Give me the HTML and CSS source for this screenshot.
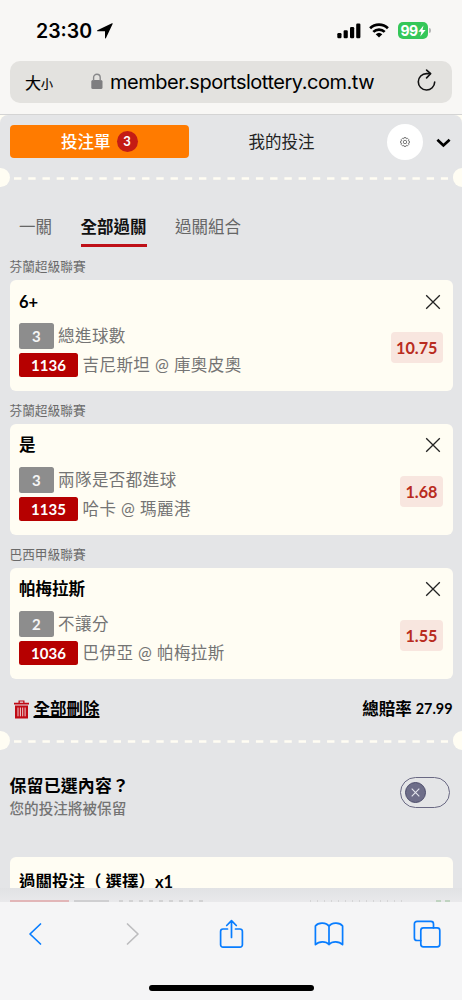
FILE: index.html
```html
<!DOCTYPE html>
<html lang="zh-Hant">
<head>
<meta charset="utf-8">
<meta name="viewport" content="width=device-width, initial-scale=1">
<title>投注單</title>
<link rel="stylesheet" href="styles.css">
</head>
<body>
<div class="screen">
  <header class="browser-top">
    <div class="status">
      <span class="clock">23:30</span>
      <svg class="location" width="16" height="16" viewBox="0 0 16 16"><path d="M.4 7.2 15 .3c.5-.2.8.1.6.6L9 15.1c-.3.7-1 .6-1-.1V8.2H.9C.1 8.2-.2 7.5.4 7.2Z"/></svg>
      <div class="status-right">
        <svg width="24" height="16" viewBox="0 0 24 16"><rect x=".3" y="10" width="4.2" height="5.3" rx="1.2"/><rect x="6.6" y="7.3" width="4.2" height="8" rx="1.2"/><rect x="13" y="4" width="4.2" height="11.3" rx="1.2"/><rect x="19.2" y=".6" width="4.2" height="14.7" rx="1.2"/></svg>
        <svg width="20" height="15" viewBox="0 0 20 15"><g fill="none" stroke="#000" stroke-width="2.7"><path d="M1.1 5.3a12.7 12.7 0 0 1 17.8 0"/><path d="M4.3 8.9a8.2 8.2 0 0 1 11.4 0"/></g><path d="M10 14.6 6.7 11.3a4.8 4.8 0 0 1 6.6 0Z"/></svg>
        <div class="battery"><span>99</span><svg width="8" height="12" viewBox="0 0 8 12"><path d="M5.5.4.4 6.8h3L2.3 11.6 7.6 5H4.5Z" fill="#fff"/></svg></div>
        <i class="battery-tip"></i>
      </div>
    </div>
    <div class="address">
      <span class="size-big">大</span><span class="size-small">小</span>
      <svg class="lock" width="12" height="17" viewBox="0 0 12 17"><rect x=".3" y="7" width="11.2" height="9" rx="1.5" fill="#7e7e80"/><path d="M2.6 8V4.6a3.3 3.3 0 0 1 6.6 0V8" fill="none" stroke="#88888a" stroke-width="1.4"/></svg>
      <span class="host">member.sportslottery.com.tw</span>
      <svg class="reload" width="20" height="24" viewBox="0 0 20 24" fill="none" stroke="#111" stroke-width="1.6" stroke-linecap="round" stroke-linejoin="round"><path d="M17.7 13a8.2 8.2 0 1 1-8.2-8.4h3.8"/><path d="M9.600 1.100l4 3.600-4 4.200"/></svg>
    </div>
  </header>

  <main class="page">
    <div class="slip">
      <nav class="top-tabs">
        <div class="tab-slip">投注單<span class="count">3</span></div>
        <div class="tab-mine">我的投注</div>
        <div class="gear"><svg width="10" height="10" viewBox="0 0 20 20" fill="none" stroke="#555" stroke-width="1.5"><path d="M8 1.2h4l.7 2.5 2.2-1.2 2.7 2.8-1.2 2.2 2.4.6v4l-2.4.6 1.2 2.2-2.7 2.8-2.2-1.2-.7 2.3H8l-.7-2.3-2.2 1.2-2.7-2.8 1.2-2.2-2.4-.6v-4l2.4-.6-1.2-2.2 2.7-2.8 2.2 1.2Z"/><circle cx="10" cy="10" r="3.4"/></svg></div>
        <svg class="chevron" width="15" height="10" viewBox="0 0 15 10"><path d="M1.4 1.7 7.4 7.5l6.2-5.8" fill="none" stroke="#000" stroke-width="2.7"/></svg>
      </nav>
      <div class="tear"><i></i><svg class="dashes" height="3"><line x1="0" y1="1.5" x2="100%" y2="1.5" stroke="#fffdf3" stroke-width="2.5" stroke-dasharray="7.4 6.83"/></svg><i></i></div>
      <nav class="modes"><span>一關</span><span class="active">全部過關</span><span>過關組合</span></nav>

      <section class="bet">
        <h3 class="league">芬蘭超級聯賽</h3>
        <div class="card">
          <div class="pick"><b>6+</b><svg class="close" width="16" height="16" viewBox="0 0 16 16"><path d="M1.2 1.2l13.6 13.6M14.8 1.2 1.2 14.8"/></svg></div>
          <div class="info">
            <div class="lines"><div class="line"><span class="tag gray">3</span><span>總進球數</span></div><div class="line match"><span class="tag red">1136</span><span>吉尼斯坦 @ 庫奧皮奧</span></div></div>
            <span class="odds">10.75</span>
          </div>
        </div>
      </section>
      <section class="bet">
        <h3 class="league">芬蘭超級聯賽</h3>
        <div class="card">
          <div class="pick"><b>是</b><svg class="close" width="16" height="16" viewBox="0 0 16 16"><path d="M1.2 1.2l13.6 13.6M14.8 1.2 1.2 14.8"/></svg></div>
          <div class="info">
            <div class="lines"><div class="line"><span class="tag gray">3</span><span>兩隊是否都進球</span></div><div class="line match"><span class="tag red">1135</span><span>哈卡 @ 瑪麗港</span></div></div>
            <span class="odds">1.68</span>
          </div>
        </div>
      </section>
      <section class="bet">
        <h3 class="league">巴西甲級聯賽</h3>
        <div class="card">
          <div class="pick"><b>帕梅拉斯</b><svg class="close" width="16" height="16" viewBox="0 0 16 16"><path d="M1.2 1.2l13.6 13.6M14.8 1.2 1.2 14.8"/></svg></div>
          <div class="info">
            <div class="lines"><div class="line"><span class="tag gray">2</span><span>不讓分</span></div><div class="line match"><span class="tag red">1036</span><span>巴伊亞 @ 帕梅拉斯</span></div></div>
            <span class="odds">1.55</span>
          </div>
        </div>
      </section>

      <div class="summary">
        <svg class="trash" width="15" height="19" viewBox="0 0 15 19"><path d="M0 2.8h4.5V.4h6v2.4H15v1.8H0ZM5.8 2.8h3.4V1.5H5.8ZM1 5.6h13v12.8H1Z" fill="#c00914" fill-rule="evenodd"/><path d="M4 7.5v8.8M6.4 7.5v8.8M8.7 7.5v8.8M11.1 7.5v8.8" stroke="#ecd0d2" stroke-width="1"/></svg>
        <a class="clear">全部刪除</a>
        <div class="total"><span>總賠率</span><span class="total-value">27.99</span></div>
      </div>
      <div class="tear lower"><i></i><svg class="dashes" height="3"><line x1="0" y1="1.5" x2="100%" y2="1.5" stroke="#fffdf3" stroke-width="2.5" stroke-dasharray="7.4 6.83"/></svg><i></i></div>
      <div class="keep">
        <div><div class="keep-title">保留已選內容？</div><div class="keep-sub">您的投注將被保留</div></div>
        <div class="toggle"><span class="knob"><svg width="9" height="9" viewBox="0 0 9 9"><path d="M.7.7l7.6 7.6M8.3.7.7 8.3" stroke="#e4e5ed" stroke-width="1.1"/></svg></span></div>
      </div>
      <div class="stake"><span>過關投注（</span><span class="choice">選擇）</span><span class="times">x1</span></div>
      <div class="fade"><i class="f1"></i><i class="f2"></i><i class="f3"></i><i class="f4"></i><i class="f5"></i></div>
    </div>
  </main>

  <footer class="toolbar">
    <div class="actions">
      <svg width="14" height="24" viewBox="0 0 14 24"><path d="M12.5 2 2 12l10.5 10" stroke="#087dff"/></svg>
      <svg width="14" height="24" viewBox="0 0 14 24"><path d="M1.5 2 12 12 1.5 22" stroke="#bdbdbf"/></svg>
      <svg width="25" height="30" viewBox="0 0 25 30" stroke="#087dff"><path d="M8.5 10H4a2.4 2.4 0 0 0-2.4 2.4v13.4A2.4 2.4 0 0 0 4 28.2h17a2.4 2.4 0 0 0 2.4-2.4V12.4A2.4 2.4 0 0 0 21 10h-4.5M12.5 18.5V2M7.7 6.5l4.8-4.8 4.8 4.8"/></svg>
      <svg width="30" height="24" viewBox="0 0 30 24" stroke="#087dff"><path d="M15 4.3C12.5.4 4.5-.2 1.4 4v18.6C5 19 12 19 15 22.5c3-3.5 10-3.5 13.6.1V4C25.5-.2 17.5.4 15 4.3V22.5"/></svg>
      <svg width="28" height="28" viewBox="0 0 28 28" stroke="#087dff"><rect x="7.8" y="7.8" width="19" height="19" rx="2.6"/><path d="M7.8 20.5H4A2.6 2.6 0 0 1 1.4 17.9V4A2.6 2.6 0 0 1 4 1.4h13.9A2.6 2.6 0 0 1 20.500 4v3.800"/></svg>
    </div>
    <div class="home"></div>
  </footer>
</div>
</body>
</html>
```

FILE: styles.css
```css
* { box-sizing: border-box; }
body { margin: 0; }
svg { display: block; flex: none; }
i, span, b { display: block; }

.screen {
  width: 462px; height: 1000px; overflow: hidden;
  display: flex; flex-direction: column;
  background: #fffdf3; color: #000;
  font-family: Lato, "Noto Sans CJK TC", sans-serif;
  white-space: nowrap;
}

/* Browser chrome */
.browser-top { height: 115px; flex: none; background: #f8f7f5; border-bottom: 1px solid #d4d4d4; }
.status { height: 61px; display: flex; align-items: center; padding: 0 31px 0 36px; }
.clock { width: 61px; font: 600 19.5px/24px Inter, sans-serif; }
.status-right { margin-left: auto; display: flex; align-items: center; }
.status-right > svg + svg { margin: 0 9px 0 8px; }
.battery {
  width: 30px; height: 17px; border-radius: 5px; background: #35c759; color: #fff;
  display: flex; align-items: center; justify-content: center;
  font: 700 14px/17px Inter, sans-serif; letter-spacing: -.5px;
}
.battery-tip { width: 2px; height: 5px; margin: 0 0 0 1px; border-radius: 0 2px 2px 0; background: #b5b5b5; }
.address {
  height: 42px; margin: 0 10px; padding: 0 15px; border-radius: 10px; background: #e3e2df;
  display: flex; align-items: center;
}
.size-big { font: 400 16px/24px "Noto Sans CJK TC", sans-serif; -webkit-text-stroke: .2px #000; }
.size-small { font: 400 12px/24px "Noto Sans CJK TC", sans-serif; padding-top: 3px; -webkit-text-stroke: .2px #000; }
.lock { margin: 0 7px 2px 38px; }
.host { font: 400 20px/26px Inter, sans-serif; letter-spacing: -.48px; }
.reload { margin: 0 0 3px auto; }

/* Bet slip */
.page { height: 787px; flex: none; }
.slip { height: 100%; border-radius: 8px 8px 0 0; background: #e4e5e7; overflow: hidden; }
.top-tabs { height: 53px; padding: 0 11px 0 9.5px; display: flex; align-items: center; font-size: 16.5px; line-height: 24px; }
.tab-slip {
  width: 179.5px; height: 33px; border-radius: 4px; background: #ff7b00; color: #fff; font-weight: 500;
  display: flex; align-items: center; justify-content: center; gap: 6px;
}
.count { width: 21px; height: 21px; border-radius: 50%; background: #c41c14; text-align: center; font: 700 13px/21px Lato, sans-serif; }
.tab-mine { width: 185px; text-align: center; color: #222; }
.gear { width: 36px; height: 36px; margin-left: 13px; border-radius: 50%; background: #fff; display: flex; align-items: center; justify-content: center; }
.chevron { margin: 2px 0 0 auto; }
.tear { height: 19px; display: flex; align-items: center; justify-content: space-between; }
.tear i { width: 9.5px; height: 19px; background: #fffdf3; border-radius: 0 10px 10px 0; }
.tear i:last-child { border-radius: 10px 0 0 10px; }
.dashes { width: 434px; margin-top: 2px; }
.modes { height: 60px; padding: 25px 19px 0; display: flex; gap: 28.5px; font-size: 16.5px; line-height: 30px; color: #666; }
.active { height: 34.5px; border-bottom: 3.5px solid #bf1018; color: #111; font-weight: 700; }
.bet { height: 143.8px; padding: 0 9.5px; }
.league { height: 33px; margin: 0; padding-top: 9px; font-size: 12.7px; line-height: 20px; font-weight: 400; color: #6a6a6a; }
.card { height: 111px; padding: 9px 9.5px 0; background: #fffdf3; border-radius: 6px; }
.pick { height: 25px; display: flex; align-items: center; justify-content: space-between; font-size: 16.5px; line-height: 25px; }
.pick b { padding-top: 1px; }
.close { margin-right: 2px; fill: none; stroke: #222; stroke-width: 1.3; }
.info { height: 66px; display: flex; align-items: center; justify-content: space-between; }
.lines { padding-top: 6px; }
.line { height: 30px; display: flex; align-items: center; gap: 4.5px; font-size: 16.5px; line-height: 26px; letter-spacing: .45px; color: #747474; }
.line.match { height: 28px; }
.tag { height: 26px; border-radius: 2.5px; color: #fff; text-align: center; font: 700 15px/26px Lato, sans-serif; letter-spacing: 0; }
.tag.gray { width: 34.5px; background: #8d8d8d; color: #f5f5f5; }
.tag.red { width: 59px; height: 24px; line-height: 24px; background: #b60000; }
.odds { height: 31px; padding: 0 5.5px; margin-top: 1px; border-radius: 4px; background: #f8e6df; color: #b92b20; font: 700 16.2px/31px Lato, sans-serif; }
.summary { height: 53px; padding: 9px 9.5px 0 14px; display: flex; align-items: center; font-size: 16.5px; font-weight: 700; line-height: 24px; }
.clear { margin-left: 4.5px; text-decoration: underline; text-decoration-thickness: 1.5px; text-underline-offset: 1px; }
.total { margin-left: auto; display: flex; gap: 4px; }
.total-value { font-size: 14.4px; }
.keep { height: 107px; padding: 24px 12px 0 9.5px; display: flex; justify-content: space-between; }
.keep-title { font-size: 16.9px; font-weight: 700; line-height: 24px; letter-spacing: .2px; }
.keep-sub { padding-top: 1px; font-size: 14.6px; font-weight: 500; line-height: 20px; color: #747474; }
.toggle { width: 50px; height: 31px; margin-top: 3px; padding: 0 4px; border: 1px solid #696883; border-radius: 16px; display: flex; align-items: center; }
.knob { width: 21px; height: 21px; border-radius: 50%; background: #6e6e89; border: 1px solid #4c4c6b; display: flex; align-items: center; justify-content: center; }
.stake {
  height: 31px; overflow: hidden; margin: 0 9.5px; padding: 13px 9.5px 0; background: #fffdf3; border-radius: 6px 6px 0 0;
  display: flex; font-size: 16.5px; font-weight: 700; line-height: 24px;
}
.choice { margin-left: 4px; }
.fade { height: 14px; display: flex; align-items: flex-end; padding-left: 9.5px; background: linear-gradient(#e1e2e4, #e9e9eb); }
.fade i { height: 2px; }
.f1 { width: 59px; background: #e2b6b8; }
.f2 { width: 35px; margin-left: 5px; background: #cfcfd1; }
.f3 { width: 86px; margin-left: 10px; background: repeating-linear-gradient(90deg, #d2d2d3 0 4px, transparent 4px 10px); }
.f4 { width: 92px; margin-left: 105px; background: repeating-linear-gradient(90deg, #d5d5d6 0 1px, transparent 1px 7px); }
.f5 { width: 14px; margin-left: 34px; background: repeating-linear-gradient(90deg, #c0d4c1 0 5px, transparent 5px 9px); }

/* Bottom toolbar */
.toolbar { height: 98px; flex: none; background: #f5f5f6; }
.actions {
  height: 64px; display: grid; grid-template-columns: repeat(5, 98px);
  justify-content: center; justify-items: center; align-items: center;
  fill: none; stroke-width: 1.7;
}
.actions path, .actions rect { stroke-linecap: round; stroke-linejoin: round; }
.home { width: 165px; height: 6px; margin: 19px auto 0; border-radius: 3px; background: #000; }
```
